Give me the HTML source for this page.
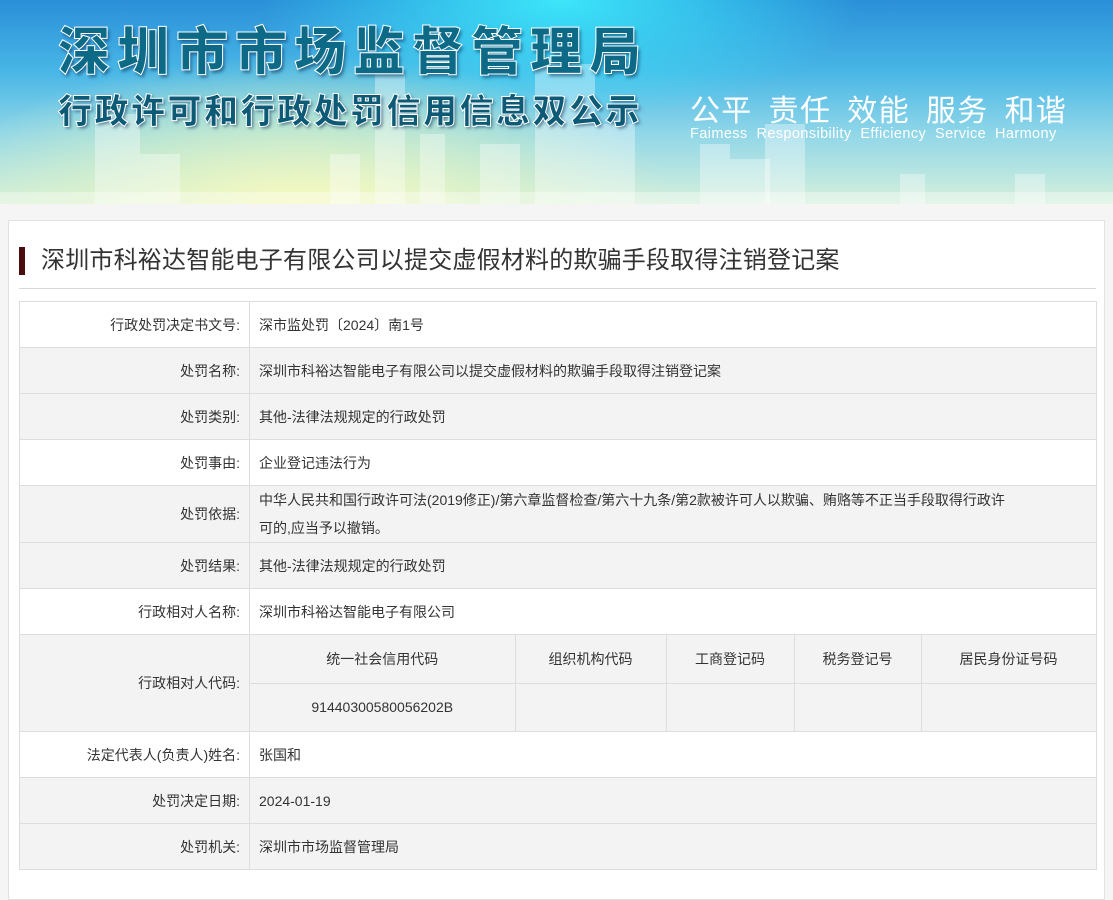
<!DOCTYPE html>
<html><head><meta charset="utf-8"><style>
*{margin:0;padding:0;box-sizing:border-box}
body{width:1113px;height:876px;overflow:hidden;background:#f5f5f5;font-family:"Liberation Sans","Noto Sans CJK SC",sans-serif;color:#333}
.hd{position:relative;height:204px;overflow:hidden;
background:radial-gradient(ellipse 380px 160px at 300px 215px,rgba(250,250,190,1),rgba(230,245,190,.6) 50%,rgba(200,240,220,0) 100%),
radial-gradient(ellipse 300px 120px at 560px 0px,rgba(60,230,250,1),rgba(60,220,245,0)),
linear-gradient(180deg,#2a8fd8 0%,#48b6e6 35%,#8fd6e8 65%,#d6f0dc 100%);}
.hd .b{position:absolute;bottom:0;background:rgba(255,255,255,.35)}
.t1{position:absolute;left:58px;top:10px;font-size:52px;font-weight:900;color:#0c6a86;letter-spacing:7px;-webkit-text-stroke:1px #fff;text-shadow:2px 3px 3px rgba(0,40,80,.5);font-family:"Noto Sans CJK SC",sans-serif}
.t2{position:absolute;left:58px;top:84px;font-size:34px;font-weight:900;color:#0c5a76;letter-spacing:2.5px;-webkit-text-stroke:1px #fff;text-shadow:2px 2px 3px rgba(0,40,80,.5);font-family:"Noto Sans CJK SC",sans-serif}
.t3{position:absolute;left:690px;top:86px;font-size:30px;color:#fff;white-space:pre;letter-spacing:1.3px;font-family:"Noto Sans CJK SC",sans-serif}
.t4{position:absolute;left:690px;top:126px;font-size:14.5px;color:#fff;white-space:pre;letter-spacing:.4px}
.box{position:absolute;left:8px;top:220px;width:1097px;height:680px;background:#fff;border:1px solid #e2e2e2}
.tt{position:absolute;left:10px;top:26px;height:28px;border-left:6px solid #4a0d0d;padding-left:16px;font-size:24px;line-height:28px;color:#333;letter-spacing:.2px}
.ln{position:absolute;left:10px;top:67px;width:1077px;border-top:1px solid #d8d8d8}
table{position:absolute;left:10px;top:80px;width:1078px;border-collapse:collapse;font-size:14px}
td{border:1px solid #ddd;height:46px;padding:0 9px}
td.l{width:230px;text-align:right;}
tr.g td{background:#f3f3f3}
.sub td{text-align:center;padding:0;height:48px;background:#f3f3f3}
</style></head><body>
<div class="hd">
<div class="b" style="left:95px;width:45px;height:90px"></div>
<div class="b" style="left:140px;width:40px;height:50px"></div>
<div class="b" style="left:330px;width:30px;height:50px"></div>
<div class="b" style="left:375px;width:30px;height:130px"></div>
<div class="b" style="left:420px;width:25px;height:70px"></div>
<div class="b" style="left:480px;width:40px;height:60px"></div>
<div class="b" style="left:535px;width:60px;height:140px"></div>
<div class="b" style="left:595px;width:40px;height:80px"></div>
<div class="b" style="left:700px;width:30px;height:60px"></div>
<div class="b" style="left:730px;width:40px;height:45px"></div>
<div class="b" style="left:765px;width:40px;height:80px"></div>
<div class="b" style="left:900px;width:25px;height:30px"></div>
<div class="b" style="left:1015px;width:30px;height:30px"></div>
<div class="b" style="left:0;width:1113px;height:12px"></div>
<div class="t1">深圳市市场监督管理局</div>
<div class="t2">行政许可和行政处罚信用信息双公示</div>
<div class="t3">公平  责任  效能  服务  和谐</div>
<div class="t4">Faimess  Responsibility  Efficiency  Service  Harmony</div>
</div>
<div class="box">
<div class="tt">深圳市科裕达智能电子有限公司以提交虚假材料的欺骗手段取得注销登记案</div>
<div class="ln"></div>
<table>
<tr><td class="l">行政处罚决定书文号:</td><td>深市监处罚〔2024〕南1号</td></tr>
<tr class="g"><td class="l">处罚名称:</td><td>深圳市科裕达智能电子有限公司以提交虚假材料的欺骗手段取得注销登记案</td></tr>
<tr class="g"><td class="l">处罚类别:</td><td>其他-法律法规规定的行政处罚</td></tr>
<tr><td class="l">处罚事由:</td><td>企业登记违法行为</td></tr>
<tr class="g"><td class="l" style="height:55px">处罚依据:</td><td style="line-height:28px">中华人民共和国行政许可法(2019修正)/第六章监督检查/第六十九条/第2款被许可人以欺骗、贿赂等不正当手段取得行政许<br>可的,应当予以撤销。</td></tr>
<tr class="g"><td class="l">处罚结果:</td><td>其他-法律法规规定的行政处罚</td></tr>
<tr><td class="l">行政相对人名称:</td><td>深圳市科裕达智能电子有限公司</td></tr>
<tr class="g"><td class="l">行政相对人代码:</td><td style="padding:0;border:none">
<table class="sub" style="position:static;width:100%;font-size:14px"><tr><td style="width:265px;border-top:none;border-left:none">统一社会信用代码</td><td style="width:151px;border-top:none">组织机构代码</td><td style="width:128px;border-top:none">工商登记码</td><td style="width:127px;border-top:none">税务登记号</td><td style="border-top:none">居民身份证号码</td></tr>
<tr><td style="border-left:none;border-bottom:none">91440300580056202B</td><td style="border-bottom:none"></td><td style="border-bottom:none"></td><td style="border-bottom:none"></td><td style="border-bottom:none"></td></tr></table></td></tr>
<tr><td class="l">法定代表人(负责人)姓名:</td><td>张国和</td></tr>
<tr class="g"><td class="l">处罚决定日期:</td><td>2024-01-19</td></tr>
<tr class="g"><td class="l">处罚机关:</td><td>深圳市市场监督管理局</td></tr>
</table>
</div>
</body></html>
